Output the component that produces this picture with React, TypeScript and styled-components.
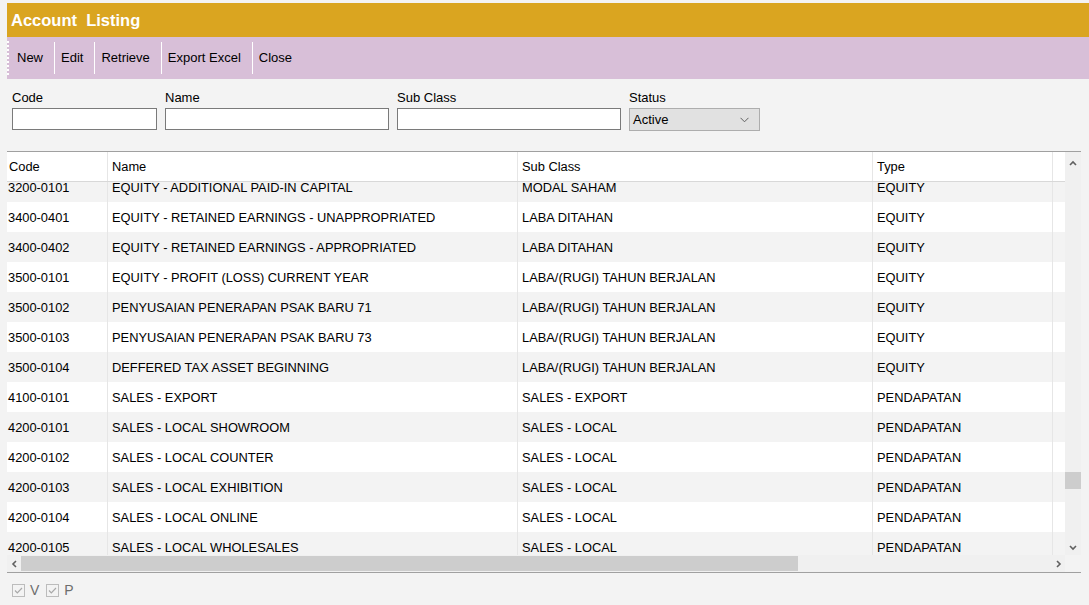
import React from "react";
import styled, { createGlobalStyle } from "styled-components";

const GlobalStyle = createGlobalStyle`
  html, body { margin: 0; padding: 0; background: #f3f3f3; }
  body { font-family: "Liberation Sans", Arial, sans-serif; font-size: 13px; color: #000; }
  * { box-sizing: border-box; }
`;

const Page = styled.div`
  width: 1089px;
  height: 605px;
  padding: 3px 0 0 7px;
  display: flex;
  flex-direction: column;
  overflow: hidden;
`;

const TitleBar = styled.div`
  height: 34px;
  background: #daa520;
  color: #fff;
  font-weight: bold;
  font-size: 16.5px;
  display: flex;
  align-items: center;
  padding-left: 4px;
  white-space: pre;
`;

const Toolbar = styled.div`
  height: 42px;
  background: #d8bfd8;
  display: flex;
  align-items: center;
`;

const Grip = styled.div`
  width: 2px;
  height: 34px;
  border-left: 2px dotted #fff;
  margin-right: 2px;
`;

const ToolButton = styled.div`
  padding: 0 6px;
  line-height: 16px;
  color: #000;
`;

const ToolSep = styled.div`
  width: 1px;
  height: 32px;
  background: #fff;
  margin-left: 5px;
`;

const Filters = styled.div`
  height: 72px;
  padding: 11px 0 0 5px;
  display: flex;
  gap: 8px;
`;

const Field = styled.div<{ $w: number }>`
  width: ${(p) => p.$w}px;
  display: flex;
  flex-direction: column;
  gap: 3px;
`;

const Label = styled.div`
  line-height: 15px;
  height: 15px;
`;

const TextInput = styled.div`
  height: 22px;
  background: #fff;
  border: 1px solid #7a7a7a;
`;

const Select = styled.div`
  height: 23px;
  background: #e1e1e1;
  border: 1px solid #adadad;
  display: flex;
  align-items: center;
  justify-content: space-between;
  padding: 0 10px 0 3px;
`;

const Grid = styled.div`
  width: 1074px;
  border-top: 1px solid #a0a0a0;
  display: flex;
  flex-direction: column;
`;

const Upper = styled.div`
  height: 403px;
  display: flex;
`;

const Table = styled.div`
  width: 1058px;
  display: flex;
  flex-direction: column;
  background: #fff;
  font-size: 12.85px;
`;

const HeaderRow = styled.div`
  height: 30px;
  display: flex;
  background: #fff;
  border-bottom: 1px solid #d8d8d8;
  flex-shrink: 0;
`;

const Body = styled.div`
  height: 373px;
  overflow: hidden;
`;

const BodyInner = styled.div`
  margin-top: -10px;
`;

const Row = styled.div<{ $alt: boolean }>`
  height: 30px;
  display: flex;
  background: ${(p) => (p.$alt ? "#f3f3f3" : "#fff")};
`;

const Cell = styled.div<{ $w: number; $pl: number; $first?: boolean }>`
  width: ${(p) => p.$w}px;
  flex-shrink: 0;
  display: flex;
  align-items: center;
  padding-left: ${(p) => p.$pl}px;
  border-left: ${(p) => (p.$first ? "none" : "1px solid #e6e6e6")};
  white-space: nowrap;
  overflow: hidden;
`;

const VScroll = styled.div`
  width: 16px;
  background: #f0f0f0;
  display: flex;
  flex-direction: column;
  align-items: center;
  justify-content: space-between;
  padding: 8px 0 4px;
`;

const VTrack = styled.div`
  flex: 1;
  width: 100%;
  display: flex;
  flex-direction: column;
  padding-top: 305px;
`;

const VThumb = styled.div`
  width: 100%;
  height: 17px;
  background: #cdcdcd;
`;

const Lower = styled.div`
  height: 17px;
  display: flex;
  border-bottom: 1px solid #a0a0a0;
  box-sizing: content-box;
`;

const HScroll = styled.div`
  width: 1058px;
  background: #f0f0f0;
  display: flex;
  align-items: center;
`;

const HArrow = styled.div`
  width: 14px;
  display: flex;
  justify-content: center;
  align-items: center;
`;

const HTrack = styled.div`
  flex: 1;
  height: 100%;
  display: flex;
  align-items: center;
`;

const HThumb = styled.div`
  width: 777px;
  height: 15px;
  background: #cdcdcd;
`;

const Corner = styled.div`
  width: 16px;
  background: #f3f3f3;
`;

const Status = styled.div`
  height: 32px;
  display: flex;
  align-items: center;
  padding-left: 5px;
  padding-top: 2px;
  color: #6d6d6d;
`;

const Check = styled.div`
  display: flex;
  align-items: center;
  gap: 5px;
  margin-right: 7px;
  font-size: 14px;
`;

const columns = [
  { w: 100, pl: 1 },
  { w: 410, pl: 4 },
  { w: 355, pl: 4 },
  { w: 180, pl: 4 },
  { w: 13, pl: 0 },
];

const headers = ["Code", "Name", "Sub Class", "Type", ""];

const rows: string[][] = [
  ["3200-0101", "EQUITY - ADDITIONAL PAID-IN CAPITAL", "MODAL SAHAM", "EQUITY"],
  ["3400-0401", "EQUITY - RETAINED EARNINGS - UNAPPROPRIATED", "LABA DITAHAN", "EQUITY"],
  ["3400-0402", "EQUITY - RETAINED EARNINGS - APPROPRIATED", "LABA DITAHAN", "EQUITY"],
  ["3500-0101", "EQUITY - PROFIT (LOSS) CURRENT YEAR", "LABA/(RUGI) TAHUN BERJALAN", "EQUITY"],
  ["3500-0102", "PENYUSAIAN PENERAPAN PSAK BARU 71", "LABA/(RUGI) TAHUN BERJALAN", "EQUITY"],
  ["3500-0103", "PENYUSAIAN PENERAPAN PSAK BARU 73", "LABA/(RUGI) TAHUN BERJALAN", "EQUITY"],
  ["3500-0104", "DEFFERED TAX ASSET BEGINNING", "LABA/(RUGI) TAHUN BERJALAN", "EQUITY"],
  ["4100-0101", "SALES - EXPORT", "SALES - EXPORT", "PENDAPATAN"],
  ["4200-0101", "SALES - LOCAL SHOWROOM", "SALES - LOCAL", "PENDAPATAN"],
  ["4200-0102", "SALES - LOCAL COUNTER", "SALES - LOCAL", "PENDAPATAN"],
  ["4200-0103", "SALES - LOCAL EXHIBITION", "SALES - LOCAL", "PENDAPATAN"],
  ["4200-0104", "SALES - LOCAL ONLINE", "SALES - LOCAL", "PENDAPATAN"],
  ["4200-0105", "SALES - LOCAL WHOLESALES", "SALES - LOCAL", "PENDAPATAN"],
];

const Chevron = ({ dir, color = "#606060" }: { dir: "up" | "down" | "left" | "right"; color?: string }) => {
  const d = {
    up: "M1 5 L4 2 L7 5",
    down: "M1 2 L4 5 L7 2",
    left: "M5 1 L2 4 L5 7",
    right: "M2 1 L5 4 L2 7",
  }[dir];
  const w = dir === "up" || dir === "down" ? 8 : 7;
  const h = dir === "up" || dir === "down" ? 7 : 8;
  return (
    <svg width={w} height={h} viewBox={`0 0 ${w} ${h}`}>
      <path d={d} fill="none" stroke={color} strokeWidth="1.6" />
    </svg>
  );
};

const CheckBox = () => (
  <svg width="13" height="13" viewBox="0 0 13 13">
    <rect x="0.5" y="0.5" width="12" height="12" fill="#f3f3f3" stroke="#bcbcbc" />
    <path d="M3 6.5 L5.3 8.8 L10 4" fill="none" stroke="#a8a8a8" strokeWidth="1.2" />
  </svg>
);

export default function App() {
  return (
    <>
      <GlobalStyle />
      <Page>
        <TitleBar>Account  Listing</TitleBar>
        <Toolbar>
          <Grip />
          <ToolButton>New</ToolButton>
          <ToolSep />
          <ToolButton>Edit</ToolButton>
          <ToolSep />
          <ToolButton>Retrieve</ToolButton>
          <ToolSep />
          <ToolButton>Export Excel</ToolButton>
          <ToolSep />
          <ToolButton>Close</ToolButton>
        </Toolbar>
        <Filters>
          <Field $w={145}>
            <Label>Code</Label>
            <TextInput />
          </Field>
          <Field $w={224}>
            <Label>Name</Label>
            <TextInput />
          </Field>
          <Field $w={224}>
            <Label>Sub Class</Label>
            <TextInput />
          </Field>
          <Field $w={131}>
            <Label>Status</Label>
            <Select>
              <span>Active</span>
              <svg width="9" height="6" viewBox="0 0 9 6">
                <path d="M0.5 0.8 L4.5 4.8 L8.5 0.8" fill="none" stroke="#606060" strokeWidth="1" />
              </svg>
            </Select>
          </Field>
        </Filters>
        <Grid>
          <Upper>
            <Table>
              <HeaderRow>
                {headers.map((h, i) => (
                  <Cell key={i} $w={columns[i].w} $pl={i === 0 ? 2 : columns[i].pl} $first={i === 0}>
                    {h}
                  </Cell>
                ))}
              </HeaderRow>
              <Body>
                <BodyInner>
                  {rows.map((r, ri) => (
                    <Row key={ri} $alt={ri % 2 === 0}>
                      {[...r, ""].map((c, i) => (
                        <Cell key={i} $w={columns[i].w} $pl={columns[i].pl} $first={i === 0}>
                          {c}
                        </Cell>
                      ))}
                    </Row>
                  ))}
                </BodyInner>
              </Body>
            </Table>
            <VScroll>
              <Chevron dir="up" />
              <VTrack>
                <VThumb />
              </VTrack>
              <Chevron dir="down" />
            </VScroll>
          </Upper>
          <Lower>
            <HScroll>
              <HArrow>
                <Chevron dir="left" />
              </HArrow>
              <HTrack>
                <HThumb />
              </HTrack>
              <HArrow>
                <Chevron dir="right" />
              </HArrow>
            </HScroll>
            <Corner />
          </Lower>
        </Grid>
        <Status>
          <Check>
            <CheckBox />
            <span>V</span>
          </Check>
          <Check>
            <CheckBox />
            <span>P</span>
          </Check>
        </Status>
      </Page>
    </>
  );
}
